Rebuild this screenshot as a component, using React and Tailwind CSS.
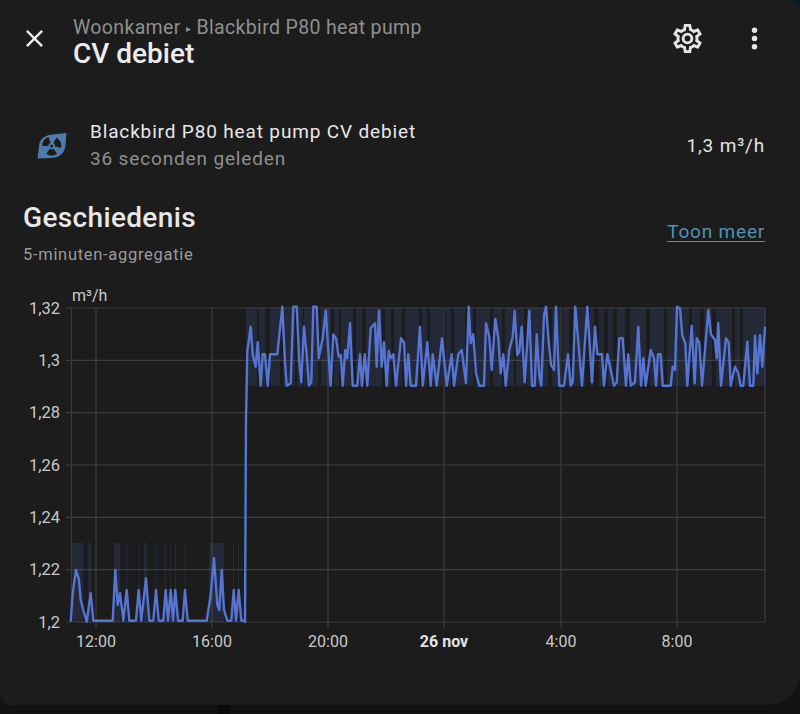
import React from "react";

const zoomPts = (ox, oy, pts) => pts.map(([x, y]) => [ox + x / 3, oy + y / 3]);

const startPts = zoomPts(20, 530, [
  [152, 275], [158, 190], [168, 120], [176, 145], [182, 210], [190, 240], [200, 275], [212, 190], [220, 272], [278, 272],
  [286, 120], [293, 225], [300, 190], [310, 272], [320, 180], [328, 272], [348, 272], [356, 180], [364, 272], [378, 145],
  [388, 272], [400, 272], [408, 180], [416, 272], [430, 272], [437, 180], [444, 272], [452, 180], [459, 272], [466, 180],
  [474, 272], [488, 272], [495, 180], [503, 272], [560, 272], [572, 195], [582, 85], [592, 225], [598, 240], [605, 120],
  [612, 240], [622, 272], [634, 272], [641, 180], [648, 272], [656, 180], [664, 272], [673, 272],
]);

const midPts = zoomPts(240, 295, [
  [22, 170], [32, 95], [38, 180], [47, 215], [53, 142], [62, 272], [68, 178], [75, 178], [83, 272], [90, 178], [112, 178],
  [118, 120], [127, 35], [135, 200], [140, 272], [152, 265], [160, 35], [170, 35], [178, 200], [184, 262], [192, 95],
  [200, 180], [207, 272], [214, 262], [220, 35], [230, 35], [236, 190], [248, 130], [257, 47], [272, 272], [280, 118],
  [288, 130], [296, 185], [302, 180], [308, 272], [316, 165], [322, 190], [330, 85], [338, 272], [352, 272], [360, 178],
  [366, 272], [374, 178], [382, 272], [392, 100], [405, 85], [410, 215], [417, 47], [425, 215], [432, 142], [440, 272],
  [446, 168], [452, 190], [460, 178], [468, 272], [483, 130], [492, 142], [498, 272], [505, 178], [512, 272], [528, 272],
  [540, 95], [548, 272], [562, 142], [572, 272], [578, 178], [590, 272], [606, 130], [620, 272], [635, 178], [642, 272],
  [655, 178], [665, 165], [678, 265], [686, 35], [692, 145], [700, 118], [708, 235], [718, 272], [732, 272], [738, 85],
  [748, 125], [755, 225], [766, 72], [775, 130], [782, 235],
]);

const endPts = zoomPts(500, 295, [
  [10, 178], [17, 272], [28, 165], [38, 125], [44, 47], [52, 180], [58, 170], [65, 95], [74, 262], [88, 47], [96, 272],
  [104, 272], [110, 118], [118, 240], [124, 272], [132, 60], [138, 35], [146, 140], [153, 210], [162, 225], [168, 35],
  [178, 272], [192, 272], [204, 178], [212, 272], [218, 262], [226, 35], [234, 130], [246, 272], [262, 35], [276, 262],
  [285, 95], [292, 178], [306, 178], [312, 272], [322, 178], [332, 225], [342, 272], [350, 262], [358, 130], [368, 130],
  [378, 272], [385, 178], [392, 272], [405, 262], [415, 95], [423, 272], [430, 190], [437, 272], [452, 165], [462, 190],
  [468, 272], [474, 178], [482, 178], [488, 272], [512, 272], [518, 215], [525, 225], [531, 35], [540, 40], [547, 122],
  [556, 145], [562, 272], [575, 92], [584, 265], [590, 130], [598, 142], [606, 272], [625, 45], [633, 118], [645, 135],
  [650, 190], [655, 85], [663, 272], [678, 130], [686, 142], [692, 272], [705, 215], [715, 235], [722, 272], [730, 272],
  [742, 140], [750, 272], [760, 272], [765, 122], [772, 235], [780, 120], [787, 215], [795, 95],
]);

const linePoints = [...startPts, [245, 622], [246, 420], ...midPts, ...endPts]
  .map(([x, y]) => `${x.toFixed(1)},${y.toFixed(1)}`)
  .join(" ");

// min/max band, [x, width]
const lowBands = [
  [72.5, 11], [88, 3], [114, 6], [126, 1], [138.5, 1], [144, 3], [156, 1], [165, 1], [170, 1], [175, 1], [185, 1],
  [209, 15], [233, 1], [238, 1],
];
const highBands = [
  [246, 11], [259, 6], [270, 10], [283, 12], [297, 6], [304, 14], [321, 10], [334, 5], [341, 12], [356, 6], [366, 16],
  [385, 6], [394, 8], [405, 14], [422, 5], [430, 13], [446, 5], [454, 11], [468, 5], [476, 14], [493, 9], [505, 9],
  [516, 8], [527, 21], [552, 8], [563, 6], [573, 12], [590, 4], [599, 5], [608, 5], [617, 8], [630, 16], [650, 14],
  [667, 22], [692, 8], [704, 8], [716, 16], [735, 5], [743, 22],
];

const yTicks = [
  ["1,32", 308], ["1,3", 360.3], ["1,28", 412.7], ["1,26", 465], ["1,24", 517.3], ["1,22", 569.7], ["1,2", 622],
];
const xTicks = [
  ["12:00", 96], ["16:00", 212], ["20:00", 328], ["26 nov", 444], ["4:00", 561], ["8:00", 677],
];

function HistoryChart() {
  return (
    <svg width="800" height="366" viewBox="0 284 800 366" className="block" style={{ fontFamily: "Roboto, sans-serif" }}>
      <text x="72" y="301" fontSize="16" fill="#c9c9c9">m³/h</text>
      {yTicks.map(([label, y]) => (
        <g key={label}>
          <line x1="66" x2="765" y1={y} y2={y} stroke="#3d3d3d" strokeWidth="1.2" />
          <text x="60" y={y + 5.5} textAnchor="end" fontSize="16.5" fill="#c9c9c9">{label}</text>
        </g>
      ))}
      <line x1="71.5" x2="71.5" y1="308" y2="622" stroke="#3d3d3d" strokeWidth="1.2" />
      <line x1="765" x2="765" y1="308" y2="622" stroke="#3d3d3d" strokeWidth="1.2" />
      {xTicks.map(([label, x]) => (
        <g key={label}>
          <line x1={x} x2={x} y1="308" y2="628" stroke="#3d3d3d" strokeWidth="1.2" />
          <text
            x={x}
            y="647"
            textAnchor="middle"
            fontSize="16"
            fontWeight={label === "26 nov" ? 700 : 400}
            fill={label === "26 nov" ? "#e4e4e4" : "#c9c9c9"}
          >
            {label}
          </text>
        </g>
      ))}
      {lowBands.map(([x, w]) => (
        <rect key={x} x={x} y="543" width={w} height="79" fill="#4f6bc4" fillOpacity="0.17" />
      ))}
      {highBands.map(([x, w]) => (
        <rect key={x} x={x} y="308" width={w} height="78" fill="#4f6bc4" fillOpacity="0.17" />
      ))}
      <polyline points={linePoints} fill="none" stroke="#5674d2" strokeWidth="2.4" strokeLinejoin="round" />
    </svg>
  );
}

// pie slice of the fan blades, angles in degrees
const blade = (cx, cy, r0, r1, a0, a1) => {
  const p = (r, a) => `${(cx + r * Math.cos((a * Math.PI) / 180)).toFixed(2)} ${(cy + r * Math.sin((a * Math.PI) / 180)).toFixed(2)}`;
  return `M${p(r0, a0)} L${p(r1, a0)} A${r1} ${r1} 0 0 1 ${p(r1, a1)} L${p(r0, a1)} A${r0} ${r0} 0 0 0 ${p(r0, a0)} Z`;
};

function FlowIcon() {
  return (
    <svg width="30" height="26" viewBox="0 0 30 26" className="shrink-0">
      <path d="M0.5 25.5 L2 13 C2.5 6 8 1.8 16 1.5 L29.5 0 L28.5 12 C28 20 22 25 14 25 Z" fill="#4f7bab" />
      <path d={blade(14.7, 13, 3.4, 9.5, 180, 250)} fill="#1c1c1c" />
      <path d={blade(14.7, 13, 3.4, 9.5, 300, 370)} fill="#1c1c1c" />
      <path d={blade(14.7, 13, 3.4, 9.5, 55, 125)} fill="#1c1c1c" />
      <circle cx="14.7" cy="13" r="1.5" fill="#1c1c1c" />
    </svg>
  );
}

export default function App() {
  return (
    <div className="w-[800px] h-[714px] overflow-hidden bg-gradient-to-b from-[#0c1a20] to-[#121212] to-[5%]" style={{ fontFamily: "Roboto, sans-serif" }}>
      <div className="w-[800px] h-[705px] bg-[#1c1c1c] rounded-tr-[12px] rounded-bl-[12px] rounded-br-[32px]">
        {/* top bar */}
        <div className="flex items-center h-[76px] pl-[20px] pr-[29px]">
          <svg width="29" height="29" viewBox="0 0 24 24" className="text-[#ececec] shrink-0">
            <path fill="currentColor" d="M19 6.41 17.59 5 12 10.59 6.41 5 5 6.41 10.59 12 5 17.59 6.41 19 12 13.41 17.59 19 19 17.59 13.41 12z" />
          </svg>
          <div className="ml-[24px] flex-1 mt-[9px]">
            <div className="text-[19.5px] leading-[21px] tracking-[0.35px] text-[#8f8f8f]">
              Woonkamer <span className="text-[10px] align-[2px]">▸</span> Blackbird P80 heat pump
            </div>
            <div className="text-[28px] leading-[30px] font-medium text-[#ececec]">CV debiet</div>
          </div>
          <svg width="35" height="35" viewBox="0 0 24 24" className="text-[#e6e6e6]">
            <path fill="currentColor" d="M12,8A4,4 0 0,1 16,12A4,4 0 0,1 12,16A4,4 0 0,1 8,12A4,4 0 0,1 12,8M12,10A2,2 0 0,0 10,12A2,2 0 0,0 12,14A2,2 0 0,0 14,12A2,2 0 0,0 12,10M10,22C9.75,22 9.54,21.82 9.5,21.58L9.13,18.93C8.5,18.68 7.96,18.34 7.44,17.94L4.95,18.95C4.73,19.03 4.46,18.95 4.34,18.73L2.34,15.27C2.21,15.05 2.27,14.78 2.46,14.63L4.57,12.97L4.5,12L4.57,11L2.46,9.37C2.27,9.22 2.21,8.95 2.34,8.73L4.34,5.27C4.46,5.05 4.73,4.96 4.95,5.05L7.44,6.05C7.96,5.66 8.5,5.32 9.13,5.07L9.5,2.42C9.54,2.18 9.75,2 10,2H14C14.25,2 14.46,2.18 14.5,2.42L14.87,5.07C15.5,5.32 16.04,5.66 16.56,6.05L19.05,5.05C19.27,4.96 19.54,5.05 19.66,5.27L21.66,8.73C21.79,8.95 21.73,9.22 21.54,9.37L19.43,11L19.5,12L19.43,13L21.54,14.63C21.73,14.78 21.79,15.05 21.66,15.27L19.66,18.73C19.54,18.95 19.27,19.04 19.05,18.95L16.56,17.95C16.04,18.34 15.5,18.68 14.87,18.93L14.5,21.58C14.46,21.82 14.25,22 14,22H10M11.25,4L10.88,6.61C9.68,6.86 8.62,7.5 7.85,8.39L5.44,7.35L4.69,8.65L6.8,10.2C6.4,11.37 6.4,12.64 6.8,13.8L4.68,15.36L5.43,16.66L7.86,15.62C8.63,16.5 9.68,17.14 10.87,17.38L11.24,20H12.76L13.13,17.39C14.32,17.14 15.37,16.5 16.14,15.62L18.57,16.66L19.32,15.36L17.2,13.81C17.6,12.64 17.6,11.37 17.2,10.2L19.31,8.65L18.56,7.35L16.15,8.39C15.38,7.5 14.32,6.86 13.12,6.62L12.75,4H11.25Z" />
          </svg>
          <svg width="33" height="33" viewBox="0 0 24 24" className="ml-[33px] text-[#e6e6e6]">
            <path fill="currentColor" d="M12,16A2,2 0 0,1 14,18A2,2 0 0,1 12,20A2,2 0 0,1 10,18A2,2 0 0,1 12,16M12,10A2,2 0 0,1 14,12A2,2 0 0,1 12,14A2,2 0 0,1 10,12A2,2 0 0,1 12,10M12,4A2,2 0 0,1 14,6A2,2 0 0,1 12,8A2,2 0 0,1 10,6A2,2 0 0,1 12,4Z" />
          </svg>
        </div>

        {/* entity row */}
        <div className="flex items-center mt-[43px] pl-[37px] pr-[35px]">
          <FlowIcon />
          <div className="ml-[23px] flex-1 tracking-[0.85px]">
            <div className="text-[19px] leading-[26px] text-[#e8e8e8]">Blackbird P80 heat pump CV debiet</div>
            <div className="text-[19px] leading-[28px] text-[#8f8f8f]">36 seconden geleden</div>
          </div>
          <div className="text-[19px] text-[#e2e2e2] tracking-[0.85px]">1,3 m³/h</div>
        </div>

        {/* history header */}
        <div className="flex justify-between items-center mt-[27px] pl-[23px] pr-[35px]">
          <div>
            <div className="text-[28px] leading-[36px] font-medium tracking-[0.35px] text-[#e8e8e8]">Geschiedenis</div>
            <div className="mt-[9px] text-[16.5px] leading-[20px] tracking-[0.7px] text-[#9a9a9a]">5-minuten-aggregatie</div>
          </div>
          <a className="mb-[2px] text-[19px] leading-[24px] tracking-[0.8px] text-[#4f93b8] underline underline-offset-[3px]">Toon meer</a>
        </div>

        <div className="mt-[19px]">
          <HistoryChart />
        </div>
      </div>
      <div className="ml-[217px] w-[13px] h-[9px] bg-[#0b0b0b]" />
    </div>
  );
}
